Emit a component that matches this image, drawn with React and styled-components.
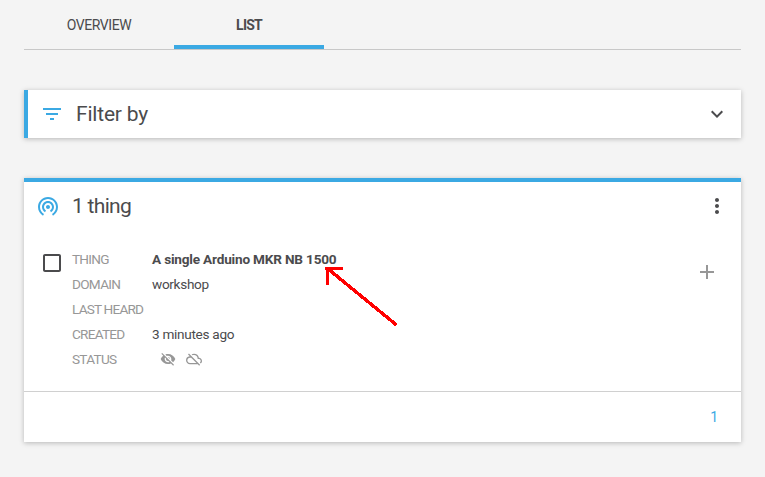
import React from 'react';
import styled, { createGlobalStyle } from 'styled-components';
import {
  MdFilterList,
  MdExpandMore,
  MdWifiTethering,
  MdMoreVert,
  MdCheckBoxOutlineBlank,
  MdAdd,
  MdVisibilityOff,
  MdOutlineCloudOff,
} from 'react-icons/md';

const GlobalStyle = createGlobalStyle`
  * { box-sizing: border-box; }
  body {
    margin: 0;
    background: #f4f4f4;
    color: #4b4b4d;
    font-family: Roboto, "Liberation Sans", sans-serif;
    font-size: 14px;
  }
  svg { display: block; flex: none; }
`;

const Page = styled.main`
  position: relative;
  height: 477px;
  padding: 0 24px;
  overflow: hidden;
`;

const Tabs = styled.nav`
  display: flex;
  height: 50px;
  border-bottom: 1px solid #c8c8c8;
`;

const Tab = styled.div`
  display: flex;
  align-items: center;
  justify-content: center;
  width: 150px;
  height: 49px;
  padding-top: ${(p) => (p.$active ? 5 : 1)}px;
  border-bottom: ${(p) => (p.$active ? '4px solid #3ba9e3' : '0')};
  font-weight: ${(p) => (p.$active ? 700 : 400)};
`;

const Fit = styled.span`
  letter-spacing: ${(p) => p.$spacing || 0}px;
  white-space: nowrap;
`;

const Card = styled.section`
  background: #fff;
  box-shadow: 0 1px 5px rgba(0, 0, 0, 0.25);
`;

const FilterCard = styled(Card)`
  display: flex;
  align-items: center;
  height: 48px;
  margin-top: 40px;
  padding: 0 12px;
  border-left: 4px solid #3ba9e3;
`;

const Title = styled.h2`
  flex: 1;
  margin: 0 0 0 12px;
  font-size: 21px;
  font-weight: 400;
  line-height: 28px;
  letter-spacing: ${(p) => p.$spacing || 0}px;
`;

const ListCard = styled(Card)`
  height: 264px;
  margin-top: 40px;
  border-top: 4px solid #3ba9e3;
`;

const ListHeader = styled.header`
  display: flex;
  align-items: center;
  height: 48px;
  padding: 0 12px;
`;

const Accent = styled.span`
  color: #3ba9e3;
`;

const Item = styled.div`
  display: flex;
  align-items: flex-start;
  height: 161px;
  padding: 17px 22px 0 16px;
`;

const CheckSlot = styled.span`
  padding-top: 4px;
`;

const AddSlot = styled.span`
  padding-top: 13px;
  color: #979797;
`;

const Details = styled.dl`
  flex: 1;
  display: grid;
  grid-template-columns: 80px 1fr;
  grid-auto-rows: 25px;
  align-items: center;
  margin: 0 0 0 8px;
  font-size: 13.6px;
  line-height: 24px;
`;

const Label = styled.dt`
  padding-bottom: 1px;
  color: #979797;
  white-space: nowrap;
  letter-spacing: ${(p) => p.$spacing || 0}px;
`;

const Value = styled.dd`
  margin: 0;
  padding-bottom: 1px;
  font-weight: ${(p) => (p.$bold ? 700 : 400)};
  letter-spacing: ${(p) => p.$spacing || 0}px;
`;

const StatusIcons = styled.dd`
  display: flex;
  gap: 10px;
  margin: 0;
  padding: 0 0 2px 8px;
  color: #979797;
`;

const Pager = styled.footer`
  display: flex;
  align-items: center;
  justify-content: flex-end;
  height: 51px;
  padding-right: 23px;
  border-top: 1px solid #d0d0d0;
  color: #3ba9e3;
`;

const Arrow = styled.svg`
  position: absolute;
  left: 320px;
  top: 260px;
`;

export default function App() {
  return (
    <Page>
      <GlobalStyle />
      <Tabs>
        <Tab><Fit $spacing={-0.42}>OVERVIEW</Fit></Tab>
        <Tab $active><Fit $spacing={-0.8}>LIST</Fit></Tab>
      </Tabs>

      <FilterCard>
        <Accent><MdFilterList size={24} /></Accent>
        <Title $spacing={-0.2}>Filter by</Title>
        <MdExpandMore size={24} />
      </FilterCard>

      <ListCard>
        <ListHeader>
          <Accent><MdWifiTethering size={24} /></Accent>
          <Title $spacing={-0.7}>1 thing</Title>
          <MdMoreVert size={24} />
        </ListHeader>
        <Item>
          <CheckSlot><MdCheckBoxOutlineBlank size={24} /></CheckSlot>
          <Details>
            <Label $spacing={-0.75}>THING</Label>
            <Value $bold $spacing={-0.19}>A single Arduino MKR NB 1500</Value>
            <Label $spacing={-0.7}>DOMAIN</Label>
            <Value $spacing={-0.32}>workshop</Value>
            <Label $spacing={-0.8}>LAST HEARD</Label>
            <Value />
            <Label $spacing={-0.75}>CREATED</Label>
            <Value $spacing={-0.3}>3 minutes ago</Value>
            <Label $spacing={-0.7}>STATUS</Label>
            <StatusIcons>
              <MdVisibilityOff size={16} />
              <MdOutlineCloudOff size={16} />
            </StatusIcons>
          </Details>
          <AddSlot><MdAdd size={24} /></AddSlot>
        </Item>
        <Pager>1</Pager>
      </ListCard>

      <Arrow width="80" height="68" viewBox="0 0 80 68" fill="none" stroke="#ff0000" strokeWidth="3" shapeRendering="crispEdges">
        <path d="M7.5 25V8.5M5 8.5H23" />
        <path d="M7.5 8.5L76.5 65" strokeWidth="3.4" />
      </Arrow>
    </Page>
  );
}
